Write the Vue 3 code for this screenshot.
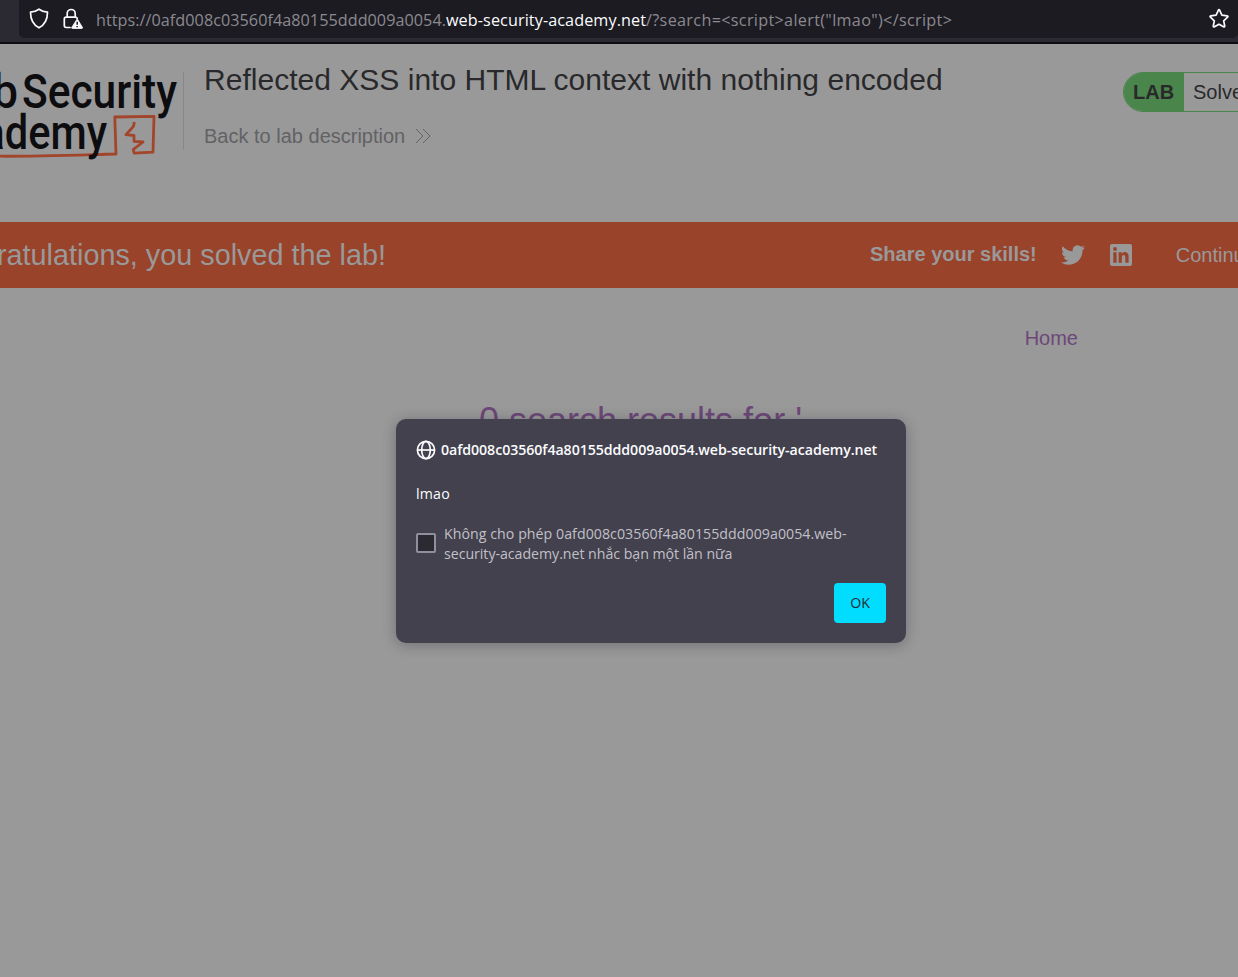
<script setup>
const host = '0afd008c03560f4a80155ddd009a0054.'
const domain = 'web-security-academy.net'
const query = '/?search=<script>alert("lmao")<\/script>'
</script>

<template>
  <div class="window">
    <header class="toolbar">
      <div class="urlbar">
        <svg class="shield" width="20" height="22" viewBox="0 0 20 22"><path d="M10 1.2C7.4 3 4.4 3.9 1.5 4.2c0 7 2.300 12.300 8.500 15.600 6.200-3.300 8.500-8.600 8.500-15.600C15.600 3.900 12.600 3 10 1.200z" /></svg>
        <svg class="lock" width="21" height="22" viewBox="0 0 21 22">
          <path class="line" d="M4.200 9V5.500a4 4 0 0 1 8 0V9M7 19.500H3.200A1.900 1.900 0 0 1 1.300 17.600V11a1.900 1.900 0 0 1 1.900-1.900h9.200a1.900 1.900 0 0 1 1.800 1.200" />
          <path class="warn" d="M14 11.200 8.800 19.300q-.4 1.200.8 1.200h9q1.300 0 .8-1.200L14.500 11.200z" />
          <path class="mark" d="M14.200 13.700v3M14.200 18v1.300" />
        </svg>
        <div class="url"><span class="u1">https://{{ host }}</span><b>{{ domain }}</b><span class="u2">{{ query }}</span></div>
        <svg class="star" width="22" height="22" viewBox="0 0 22 22"><path d="M10.300 2.300q.7-1.200 1.400 0l2.200 4.900 5.300.6q1.300.3.400 1.300l-3.900 3.700 1 5.200q.1 1.400-1.200.8L11 16.200l-4.500 2.600q-1.300.6-1.200-.8l1-5.200L2.400 9.100q-.9-1 .4-1.300l5.300-.6z" /></svg>
      </div>
    </header>

    <main class="page">
      <section class="lab-header">
        <svg class="logo" width="183" height="120" viewBox="0 0 183 120">
          <path class="sketch" d="M0 112.200c30 .3 70-1 116-2.200L114.800 73l39.200-.6-1 35.800-18.800 1-1-3.700 9.800-7.500-9-.7v-5.800l-8-.8 7.600-8.600.7-4.100" />
          <g class="word">
            <text x="-72" y="64" textLength="90" lengthAdjust="spacingAndGlyphs">Web</text>
            <text x="22" y="64" textLength="155" lengthAdjust="spacingAndGlyphs">Security</text>
            <text x="-67" y="105" textLength="174" lengthAdjust="spacingAndGlyphs">Academy</text>
          </g>
        </svg>
        <div class="divider"></div>
        <div class="titles">
          <h1>Reflected XSS into HTML context with nothing encoded</h1>
          <a class="back">Back to lab description
            <svg width="16" height="16" viewBox="0 0 16 16"><path d="M1 1l7 7-7 7M8 1l7 7-7 7" /></svg>
          </a>
        </div>
        <div class="status"><strong>LAB</strong><span>Solved</span></div>
      </section>

      <section class="banner">
        <div class="congrats">Congratulations, you solved the lab!</div>
        <div class="share">
          <strong>Share your skills!</strong>
          <svg class="twitter" width="24" height="24" viewBox="0 0 24 24"><path d="M23.950 4.570a10 10 0 0 1-2.820.77 4.960 4.960 0 0 0 2.160-2.720c-.950.550-2 .950-3.130 1.180a4.920 4.920 0 0 0-8.380 4.480C7.690 8.090 4.070 6.130 1.640 3.160a4.820 4.820 0 0 0-.67 2.480c0 1.710.87 3.210 2.190 4.100a4.900 4.900 0 0 1-2.230-.62v.06a4.920 4.920 0 0 0 3.950 4.830 5 5 0 0 1-2.210.08 4.940 4.940 0 0 0 4.600 3.420A9.870 9.870 0 0 1 0 19.540a13.990 13.990 0 0 0 7.550 2.210c9.050 0 14-7.500 14-13.980 0-.21 0-.42-.02-.63a9.940 9.940 0 0 0 2.460-2.550z" /></svg>
          <svg class="linkedin" width="24" height="24" viewBox="0 0 24 24">
            <rect x="1" y="1" width="22" height="22" rx="2" />
            <path d="M4.300 9.300h3.300v10.500H4.300zM9.600 9.300h3.200v1.500c1.700-2.700 6.800-2.400 6.800 2.500v6.500h-3.300v-5.700c0-3.100-3.400-2.800-3.400 0v5.700H9.600z" />
            <circle cx="6" cy="6" r="1.900" />
          </svg>
          <span class="continue">Continue learning</span>
        </div>
      </section>

      <nav><a>Home</a></nav>
      <h2>0 search results for '</h2>
    </main>

    <div class="dialog">
      <div class="origin">
        <svg width="20" height="20" viewBox="0 0 20 20"><circle cx="10" cy="10" r="8.600" /><ellipse cx="10" cy="10" rx="4.300" ry="8.600" /><path d="M1.500 10h17" /></svg>
        <span>{{ host }}{{ domain }}</span>
      </div>
      <p class="message">lmao</p>
      <label>
        <i class="box"></i>
        <span><span class="l1">Không cho phép {{ host }}web-</span><br /><span class="l2">security-academy.net nhắc bạn một lần nữa</span></span>
      </label>
      <button>OK</button>
    </div>
  </div>
</template>

<style>
html, body { margin: 0; overflow: hidden; }
</style>

<style scoped>
.window { position: relative; width: 1238px; height: 977px; overflow: hidden; background: #99999a; font-family: "Liberation Sans", Arial, sans-serif; }
.toolbar { height: 42px; background: #2b2a33; border-bottom: 2px solid #0e0e12; box-sizing: content-box; padding-left: 19px; }
.urlbar { height: 38px; background: #1c1b22; border-radius: 0 0 5px 5px; display: flex; align-items: center; }
.urlbar svg { fill: none; stroke: #fbfbfe; stroke-width: 1.7; stroke-linejoin: round; stroke-linecap: round; flex: none; }
.shield { margin: 0 0 1px 10px; }
.lock { margin: 0 0 1px 14px; }
.urlbar .warn { fill: #fbfbfe; stroke-width: .8; }
.urlbar .mark { stroke: #1c1b22; stroke-width: 1.500; stroke-linecap: butt; }
.url { margin: 2px 0 0 12px; width: 1112px; white-space: pre; font: 16.200px/24px "Open Sans", "Noto Sans", sans-serif; color: #8b8a90; }
.url b { font-weight: 400; color: #fbfbfe; letter-spacing: .09px; }
.u1 { letter-spacing: .04px; }
.u2 { letter-spacing: .32px; }
.star { margin-bottom: 1px; }
.page { height: 933px; }
.lab-header { height: 178px; display: flex; align-items: flex-start; }
.logo { flex: none; }
.word { font: 500 48px Roboto, sans-serif; fill: #0d0d0f; }
.sketch { fill: none; stroke: #a3452b; stroke-width: 2.800; stroke-linejoin: round; }
.divider { flex: none; width: 1px; height: 78px; margin-top: 28px; background: #88888a; }
.titles { flex: none; width: 919px; margin: 18px 0 0 20px; color: #29292b; }
h1 { margin: 0; font-size: 30px; line-height: 36px; font-weight: 400; white-space: nowrap; letter-spacing: .02px; }
.back { display: flex; align-items: center; gap: 10px; margin-top: 26px; font-size: 20px; line-height: 24px; color: #626264; }
.back svg { fill: none; stroke: #626264; stroke-width: 1; }
.status { width: 160px; flex: none; height: 38px; margin-top: 28px; border: 1px solid #4a854c; border-radius: 20px 0 0 20px; overflow: hidden; display: flex; font-size: 20px; line-height: 38px; color: #29292b; }
.status strong { width: 51px; padding-left: 9px; background: #4a854c; }
.status strong + span { padding-left: 9px; }
.banner { height: 66px; background: #99432b; color: #99999a; display: flex; align-items: center; justify-content: space-between; }
.congrats { width: 386px; display: flex; justify-content: flex-end; white-space: nowrap; font-size: 28.800px; }
.share { width: 368px; display: flex; align-items: center; font-size: 20px; white-space: nowrap; }
.share strong { margin-bottom: 2px; }
.share svg { flex: none; fill: #99999a; }
.twitter { margin-left: 24px; }
.linkedin { margin-left: 24px; }
.linkedin path, .linkedin circle { fill: #99432b; }
.continue { margin-left: 43px; }
nav { width: 1078px; margin-top: 38px; text-align: right; font-size: 20px; line-height: 24px; color: #6c4878; }
h2 { margin: 50px 0 0 479px; font-size: 36px; line-height: 42px; font-weight: 400; color: #6c4878; }
.dialog { position: absolute; left: 396px; top: 419px; width: 510px; height: 224px; box-sizing: border-box; padding: 20px; border-radius: 10px; background: #42414d; box-shadow: 0 2px 14px rgba(20, 20, 30, .3); color: #fbfbfe; font: 14.200px/20px "Open Sans", "Noto Sans", sans-serif; display: flex; flex-direction: column; }
.origin { display: flex; gap: 5px; align-items: center; height: 22px; font-weight: 600; white-space: nowrap; letter-spacing: -.07px; }
.origin svg { fill: none; stroke: #fbfbfe; stroke-width: 1.700; flex: none; }
.message { margin: 23px 0 20px; letter-spacing: .2px; }
label { display: flex; gap: 8px; align-items: center; color: #c1c0c8; white-space: nowrap; }
.l1 { letter-spacing: .04px; }
.l2 { letter-spacing: -.04px; }
.box { width: 16px; height: 16px; margin-bottom: 2px; border: 2px solid #8f8f9d; border-radius: 2px; background: #2b2a33; flex: none; }
button { align-self: flex-end; margin-top: 19px; width: 52px; height: 40px; padding: 0; border: 0; border-radius: 4px; background: #0df; color: #2b2a33; font: inherit; }
</style>
